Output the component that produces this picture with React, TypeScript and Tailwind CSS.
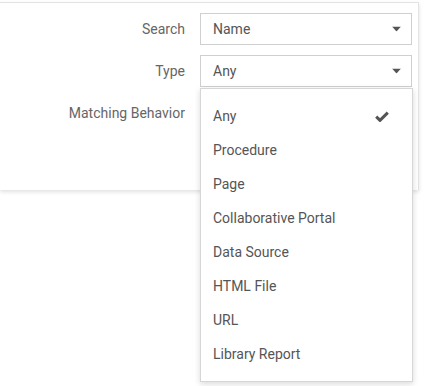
const types = [
  "Any",
  "Procedure",
  "Page",
  "Collaborative Portal",
  "Data Source",
  "HTML File",
  "URL",
  "Library Report",
];

function Caret() {
  return (
    <svg width="9" height="5" viewBox="0 0 9 5" className="absolute right-[10px] top-1/2 -translate-y-1/2">
      <path d="M0 0h9L4.5 5z" fill="#555" />
    </svg>
  );
}

function Select({ value }: { value: string }) {
  return (
    <div className="relative flex h-8 w-[212px] items-center border border-[#cfcfcf] bg-white pl-[12px] text-[14px] text-[#555]">
      {value}
      <Caret />
    </div>
  );
}

function Row({ label, children }: { label: string; children?: React.ReactNode }) {
  return (
    <div className="flex h-8 items-center">
      <div className="w-[185px] text-right text-[14px] text-[#666]">{label}</div>
      <div className="ml-[15px]">{children}</div>
    </div>
  );
}

export default function App() {
  return (
    <div className="relative h-[386px] w-[428px] overflow-hidden bg-white pt-[2px] font-['Roboto',sans-serif]">
      <div className="h-[188px] w-[419px] border-t border-r border-[#e3e3e3] bg-white pt-[10px] shadow-[0_2px_4px_rgba(0,0,0,0.12)]">
        <div className="flex flex-col gap-[10px]">
          <Row label="Search">
            <Select value="Name" />
          </Row>
          <Row label="Type">
            <Select value="Any" />
          </Row>
          <Row label="Matching Behavior" />
        </div>
      </div>

      <div className="absolute left-[200px] top-[88px] w-[213px] border border-[#d6d6d6] bg-white py-[10px] shadow-[0_2px_6px_rgba(0,0,0,0.15)]">
        {types.map((t, i) => (
          <div key={t} className="flex h-[34px] items-center justify-between pl-[12px] pr-[23px] text-[14px] text-[#555]">
            <span>{t}</span>
            {i === 0 && (
              <svg width="14" height="11" viewBox="0 0 14 11">
                <path d="M1.2 5.6l3.8 3.8L12.8 1.6" stroke="#555" strokeWidth="3" fill="none" />
              </svg>
            )}
          </div>
        ))}
      </div>
    </div>
  );
}
